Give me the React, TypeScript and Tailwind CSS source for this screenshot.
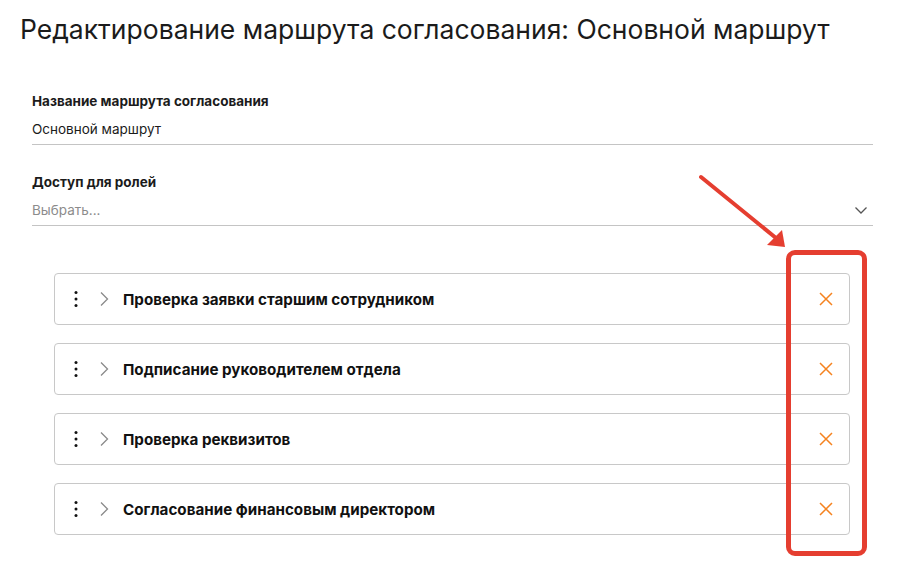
const STEPS = [
  'Проверка заявки старшим сотрудником',
  'Подписание руководителем отдела',
  'Проверка реквизитов',
  'Согласование финансовым директором',
];

const font = { fontFamily: 'Inter, "Noto Sans", sans-serif' };

function Dots() {
  return (
    <svg width="8" height="18" viewBox="0 0 8 18" className="shrink-0">
      <circle cx="4" cy="2.5" r="1.5" fill="#111" />
      <circle cx="4" cy="9" r="1.5" fill="#111" />
      <circle cx="4" cy="15.5" r="1.5" fill="#111" />
    </svg>
  );
}

function Arrow() {
  return (
    <svg width="10" height="16" viewBox="0 0 10 16" className="shrink-0">
      <path d="M2 1.5 L8.5 8 L2 14.5" fill="none" stroke="#8a8a8a" strokeWidth="1.3" />
    </svg>
  );
}

function Caret() {
  return (
    <svg width="14" height="10" viewBox="0 0 14 10" className="shrink-0">
      <path d="M1.5 2.5 L7 8 L12.5 2.5" fill="none" stroke="#555" strokeWidth="1.3" />
    </svg>
  );
}

function Cross() {
  return (
    <svg width="16" height="16" viewBox="0 0 16 16" className="shrink-0">
      <path d="M2 2 L14 14 M14 2 L2 14" stroke="#f5821f" strokeWidth="1.5" />
    </svg>
  );
}

export default function App() {
  return (
    <div className="relative w-[905px] h-[581px] bg-white text-[#1b1b1b]" style={font}>
      {/* Page title */}
      <h1 className="pl-5 pt-[11px] text-[26.5px] leading-[36px] font-normal">
        Редактирование маршрута согласования: Основной маршрут
      </h1>

      <div className="px-8">
        {/* Route name */}
        <div className="mt-[44px] border-b border-[#c4c4c4] pb-[5px]">
          <div className="text-[13.5px] leading-5 font-bold">Название маршрута согласования</div>
          <div className="mt-2 text-[13.5px] leading-5">Основной маршрут</div>
        </div>

        {/* Roles */}
        <div className="mt-[27px] border-b border-[#c4c4c4] pb-[5px]">
          <div className="text-[13.5px] leading-5 font-bold">Доступ для ролей</div>
          <div className="mt-2 flex items-center justify-between">
            <span className="text-[13.5px] leading-5 text-[#8c8c8c]">Выбрать...</span>
            <span className="mr-[5px]"><Caret /></span>
          </div>
        </div>

        {/* Steps */}
        <div className="mt-[47px] ml-[22px] mr-[23px] flex flex-col gap-[18px]">
          {STEPS.map((step) => (
            <div
              key={step}
              className="h-[52px] flex items-center border border-[#c8c8c8] rounded-[4px] pl-[17px] pr-[15px]"
            >
              <Dots />
              <span className="ml-[19px]"><Arrow /></span>
              <span className="ml-[14px] pt-[2px] text-[15.2px] font-bold text-[#111]">{step}</span>
              <div className="flex-1" />
              <Cross />
            </div>
          ))}
        </div>
      </div>

      {/* Annotation: highlight box and arrow */}
      <div className="absolute left-[786px] top-[250px] w-[81px] h-[306px] border-[5px] border-[#e53e30] rounded-[9px]" />
      <svg className="absolute left-0 top-0 pointer-events-none" width="905" height="581">
        <line x1="701" y1="177" x2="776" y2="238" stroke="#e53e30" strokeWidth="4" strokeLinecap="round" />
        <polygon points="785,247 767,245 782,230" fill="#e53e30" />
      </svg>
    </div>
  );
}
